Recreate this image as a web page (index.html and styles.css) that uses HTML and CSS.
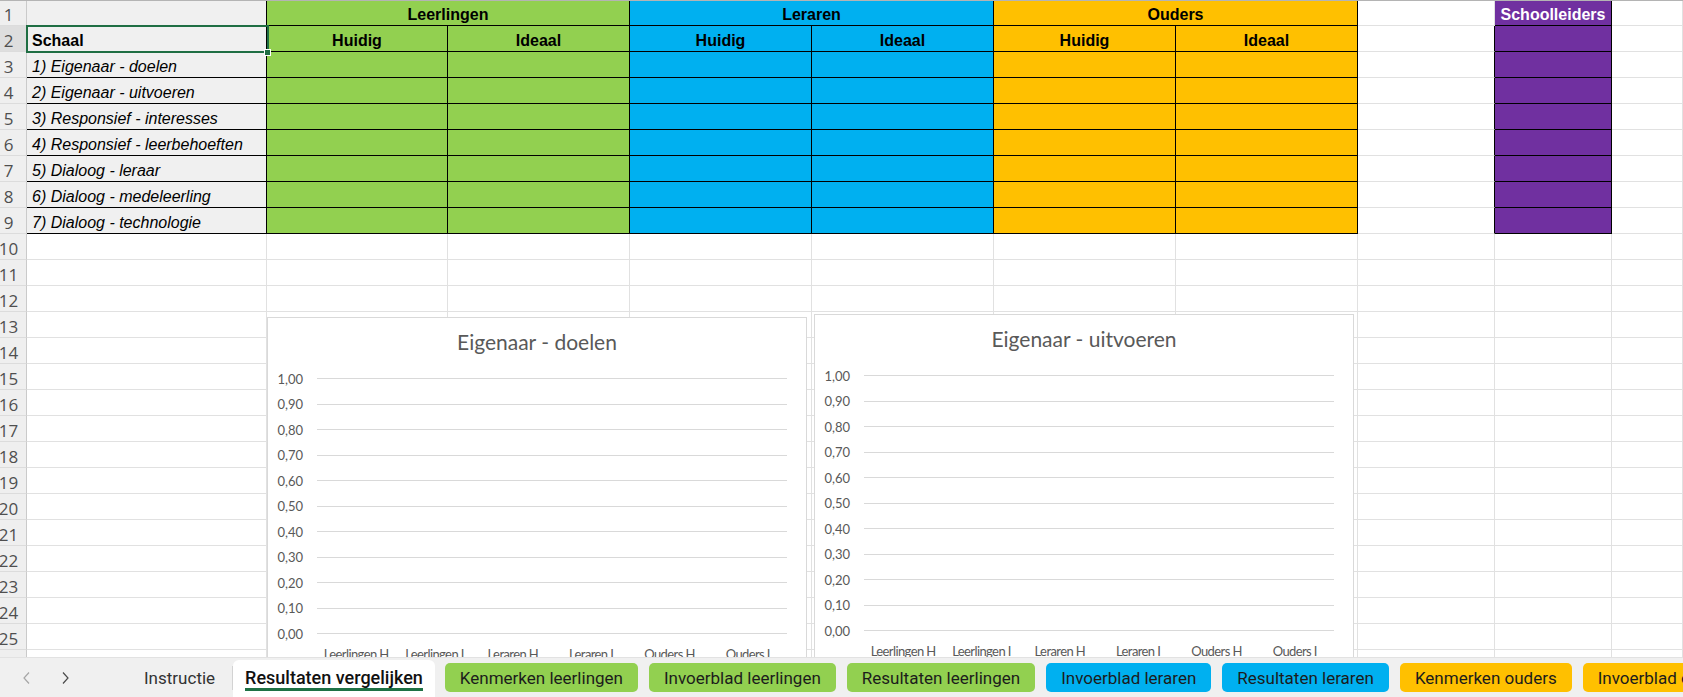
FILE: index.html
```html
<!DOCTYPE html>
<html lang="nl">
<head>
<meta charset="utf-8">
<title>Resultaten vergelijken</title>
<link rel="stylesheet" href="styles.css">
</head>
<body>
<div class="app">
  <div class="sheet">
    <div class="row">
      <div class="c rh">1</div>
      <div class="c a ab1"></div>
      <div class="c g t hd span2">Leerlingen</div>
      <div class="c b t hd span2">Leraren</div>
      <div class="c o t hd span2">Ouders</div>
      <div class="c"></div>
      <div class="c p t hd">Schoolleiders</div>
      <div class="c"></div>
    </div>
    <div class="row">
      <div class="c rh rh-sel">2</div>
      <div class="c a ab schaal">Schaal</div>
      <div class="c g t hd">Huidig</div>
      <div class="c g t hd">Ideaal</div>
      <div class="c b t hd">Huidig</div>
      <div class="c b t hd">Ideaal</div>
      <div class="c o t hd">Huidig</div>
      <div class="c o t hd">Ideaal</div>
      <div class="c hr"></div>
      <div class="c p t"></div>
      <div class="c"></div>
    </div>
    <div class="row">
      <div class="c rh">3</div>
      <div class="c a ab it">1) Eigenaar - doelen</div>
      <div class="c g t"></div><div class="c g t"></div>
      <div class="c b t"></div><div class="c b t"></div>
      <div class="c o t"></div><div class="c o t"></div>
      <div class="c hr"></div><div class="c p t"></div><div class="c"></div>
    </div>
    <div class="row">
      <div class="c rh">4</div>
      <div class="c a ab it">2) Eigenaar - uitvoeren</div>
      <div class="c g t"></div><div class="c g t"></div>
      <div class="c b t"></div><div class="c b t"></div>
      <div class="c o t"></div><div class="c o t"></div>
      <div class="c hr"></div><div class="c p t"></div><div class="c"></div>
    </div>
    <div class="row">
      <div class="c rh">5</div>
      <div class="c a ab it">3) Responsief - interesses</div>
      <div class="c g t"></div><div class="c g t"></div>
      <div class="c b t"></div><div class="c b t"></div>
      <div class="c o t"></div><div class="c o t"></div>
      <div class="c hr"></div><div class="c p t"></div><div class="c"></div>
    </div>
    <div class="row">
      <div class="c rh">6</div>
      <div class="c a ab it">4) Responsief - leerbehoeften</div>
      <div class="c g t"></div><div class="c g t"></div>
      <div class="c b t"></div><div class="c b t"></div>
      <div class="c o t"></div><div class="c o t"></div>
      <div class="c hr"></div><div class="c p t"></div><div class="c"></div>
    </div>
    <div class="row">
      <div class="c rh">7</div>
      <div class="c a ab it">5) Dialoog - leraar</div>
      <div class="c g t"></div><div class="c g t"></div>
      <div class="c b t"></div><div class="c b t"></div>
      <div class="c o t"></div><div class="c o t"></div>
      <div class="c hr"></div><div class="c p t"></div><div class="c"></div>
    </div>
    <div class="row">
      <div class="c rh">8</div>
      <div class="c a ab it">6) Dialoog - medeleerling</div>
      <div class="c g t"></div><div class="c g t"></div>
      <div class="c b t"></div><div class="c b t"></div>
      <div class="c o t"></div><div class="c o t"></div>
      <div class="c hr"></div><div class="c p t"></div><div class="c"></div>
    </div>
    <div class="row">
      <div class="c rh">9</div>
      <div class="c a ab it">7) Dialoog - technologie</div>
      <div class="c g t"></div><div class="c g t"></div>
      <div class="c b t"></div><div class="c b t"></div>
      <div class="c o t"></div><div class="c o t"></div>
      <div class="c hr"></div><div class="c p t"></div><div class="c"></div>
    </div>
    <div class="row"><div class="c rh">10</div><div class="c"></div><div class="c"></div><div class="c"></div><div class="c"></div><div class="c"></div><div class="c"></div><div class="c"></div><div class="c"></div><div class="c"></div><div class="c"></div></div>
    <div class="row"><div class="c rh">11</div><div class="c"></div><div class="c"></div><div class="c"></div><div class="c"></div><div class="c"></div><div class="c"></div><div class="c"></div><div class="c"></div><div class="c"></div><div class="c"></div></div>
    <div class="row"><div class="c rh">12</div><div class="c"></div><div class="c"></div><div class="c"></div><div class="c"></div><div class="c"></div><div class="c"></div><div class="c"></div><div class="c"></div><div class="c"></div><div class="c"></div></div>
    <div class="row"><div class="c rh">13</div><div class="c"></div><div class="c"></div><div class="c"></div><div class="c"></div><div class="c"></div><div class="c"></div><div class="c"></div><div class="c"></div><div class="c"></div><div class="c"></div></div>
    <div class="row"><div class="c rh">14</div><div class="c"></div><div class="c"></div><div class="c"></div><div class="c"></div><div class="c"></div><div class="c"></div><div class="c"></div><div class="c"></div><div class="c"></div><div class="c"></div></div>
    <div class="row"><div class="c rh">15</div><div class="c"></div><div class="c"></div><div class="c"></div><div class="c"></div><div class="c"></div><div class="c"></div><div class="c"></div><div class="c"></div><div class="c"></div><div class="c"></div></div>
    <div class="row"><div class="c rh">16</div><div class="c"></div><div class="c"></div><div class="c"></div><div class="c"></div><div class="c"></div><div class="c"></div><div class="c"></div><div class="c"></div><div class="c"></div><div class="c"></div></div>
    <div class="row"><div class="c rh">17</div><div class="c"></div><div class="c"></div><div class="c"></div><div class="c"></div><div class="c"></div><div class="c"></div><div class="c"></div><div class="c"></div><div class="c"></div><div class="c"></div></div>
    <div class="row"><div class="c rh">18</div><div class="c"></div><div class="c"></div><div class="c"></div><div class="c"></div><div class="c"></div><div class="c"></div><div class="c"></div><div class="c"></div><div class="c"></div><div class="c"></div></div>
    <div class="row"><div class="c rh">19</div><div class="c"></div><div class="c"></div><div class="c"></div><div class="c"></div><div class="c"></div><div class="c"></div><div class="c"></div><div class="c"></div><div class="c"></div><div class="c"></div></div>
    <div class="row"><div class="c rh">20</div><div class="c"></div><div class="c"></div><div class="c"></div><div class="c"></div><div class="c"></div><div class="c"></div><div class="c"></div><div class="c"></div><div class="c"></div><div class="c"></div></div>
    <div class="row"><div class="c rh">21</div><div class="c"></div><div class="c"></div><div class="c"></div><div class="c"></div><div class="c"></div><div class="c"></div><div class="c"></div><div class="c"></div><div class="c"></div><div class="c"></div></div>
    <div class="row"><div class="c rh">22</div><div class="c"></div><div class="c"></div><div class="c"></div><div class="c"></div><div class="c"></div><div class="c"></div><div class="c"></div><div class="c"></div><div class="c"></div><div class="c"></div></div>
    <div class="row"><div class="c rh">23</div><div class="c"></div><div class="c"></div><div class="c"></div><div class="c"></div><div class="c"></div><div class="c"></div><div class="c"></div><div class="c"></div><div class="c"></div><div class="c"></div></div>
    <div class="row"><div class="c rh">24</div><div class="c"></div><div class="c"></div><div class="c"></div><div class="c"></div><div class="c"></div><div class="c"></div><div class="c"></div><div class="c"></div><div class="c"></div><div class="c"></div></div>
    <div class="row"><div class="c rh">25</div><div class="c"></div><div class="c"></div><div class="c"></div><div class="c"></div><div class="c"></div><div class="c"></div><div class="c"></div><div class="c"></div><div class="c"></div><div class="c"></div></div>
    <div class="row"><div class="c rh"></div><div class="c"></div><div class="c"></div><div class="c"></div><div class="c"></div><div class="c"></div><div class="c"></div><div class="c"></div><div class="c"></div><div class="c"></div><div class="c"></div></div>

    <div class="selection"></div>
    <div class="fill-handle"></div>

    <div class="chart chart-1">
      <div class="ctitle">Eigenaar - doelen</div>
      <div class="plot">
        <div class="tick"><span class="yl">1,00</span><span class="gl"></span></div>
        <div class="tick"><span class="yl">0,90</span><span class="gl"></span></div>
        <div class="tick"><span class="yl">0,80</span><span class="gl"></span></div>
        <div class="tick"><span class="yl">0,70</span><span class="gl"></span></div>
        <div class="tick"><span class="yl">0,60</span><span class="gl"></span></div>
        <div class="tick"><span class="yl">0,50</span><span class="gl"></span></div>
        <div class="tick"><span class="yl">0,40</span><span class="gl"></span></div>
        <div class="tick"><span class="yl">0,30</span><span class="gl"></span></div>
        <div class="tick"><span class="yl">0,20</span><span class="gl"></span></div>
        <div class="tick"><span class="yl">0,10</span><span class="gl"></span></div>
        <div class="tick"><span class="yl">0,00</span><span class="gl"></span></div>
      </div>
      <div class="cats">
        <span>Leerlingen H</span><span>Leerlingen I</span><span>Leraren H</span><span>Leraren I</span><span>Ouders H</span><span>Ouders I</span>
      </div>
    </div>

    <div class="chart chart-2">
      <div class="ctitle">Eigenaar - uitvoeren</div>
      <div class="plot">
        <div class="tick"><span class="yl">1,00</span><span class="gl"></span></div>
        <div class="tick"><span class="yl">0,90</span><span class="gl"></span></div>
        <div class="tick"><span class="yl">0,80</span><span class="gl"></span></div>
        <div class="tick"><span class="yl">0,70</span><span class="gl"></span></div>
        <div class="tick"><span class="yl">0,60</span><span class="gl"></span></div>
        <div class="tick"><span class="yl">0,50</span><span class="gl"></span></div>
        <div class="tick"><span class="yl">0,40</span><span class="gl"></span></div>
        <div class="tick"><span class="yl">0,30</span><span class="gl"></span></div>
        <div class="tick"><span class="yl">0,20</span><span class="gl"></span></div>
        <div class="tick"><span class="yl">0,10</span><span class="gl"></span></div>
        <div class="tick"><span class="yl">0,00</span><span class="gl"></span></div>
      </div>
      <div class="cats">
        <span>Leerlingen H</span><span>Leerlingen I</span><span>Leraren H</span><span>Leraren I</span><span>Ouders H</span><span>Ouders I</span>
      </div>
    </div>
  </div>

  <div class="tabs">
    <div class="nav">
      <svg class="arrow" width="10" height="14" viewBox="0 0 10 14"><path d="M8 1.5 L3 7 L8 12.5" fill="none" stroke="#a6a6a6" stroke-width="1.2"/></svg>
      <svg class="arrow" width="10" height="14" viewBox="0 0 10 14"><path d="M2 1.5 L7 7 L2 12.5" fill="none" stroke="#4a4a4a" stroke-width="1.2"/></svg>
    </div>
    <div class="tab plain">Instructie</div>
    <div class="sep"></div>
    <div class="tab active"><span>Resultaten vergelijken</span></div>
    <div class="tab col tg first">Kenmerken leerlingen</div>
    <div class="tab col tg">Invoerblad leerlingen</div>
    <div class="tab col tg">Resultaten leerlingen</div>
    <div class="tab col tb">Invoerblad leraren</div>
    <div class="tab col tb">Resultaten leraren</div>
    <div class="tab col to">Kenmerken ouders</div>
    <div class="tab col to">Invoerblad ouders</div>
  </div>
</div>
</body>
</html>
```

FILE: styles.css
```css
* { box-sizing: border-box; margin: 0; padding: 0; }
html, body { width: 1683px; height: 697px; overflow: hidden; background: #fff; }
body { font-family: "Liberation Sans", Arial, sans-serif; color: #000; }

.app { display: flex; flex-direction: column; width: 1683px; height: 697px; }

.sheet { position: relative; height: 657px; flex: none; overflow: hidden; }
.sheet::before { content: ""; position: absolute; left: 0; top: 0; right: 0; height: 1px; background: #b4b4b4; z-index: 5; }

.row {
  display: grid;
  grid-template-columns: 27px 240px 181px 182px 182px 182px 182px 182px 137px 117px 71px;
  height: 26px;
}

.c {
  border-right: 1px solid #e1e1e1;
  border-bottom: 1px solid #e1e1e1;
  display: flex;
  align-items: flex-end;
  font-size: 16px;
  line-height: 18px;
  padding: 0 0 1px 5px;
  white-space: nowrap;
  overflow: hidden;
}
.span2 { grid-column: span 2; }

.rh {
  background: #efefef;
  border-right-color: #cacaca;
  border-bottom-color: #dcdcdc;
  font-family: "Open Sans", sans-serif;
  font-size: 17px;
  color: #4f4f4f;
  justify-content: center;
  padding: 0 9px 1px 0;
}
.rh-sel { background: #dedede; }

.a { background: #f0f0f0; border-right-color: #000; }
.ab { border-bottom-color: #000; }
.ab1 { border-bottom-color: #d6d6d6; }
.schaal { font-weight: bold; }
.it { font-style: italic; }

.g { background: #92d050; }
.b { background: #00b0f0; }
.o { background: #ffc000; }
.p { background: #7030a0; color: #fff; }
.t { border-right-color: #000; border-bottom-color: #000; }
.hr { border-right-color: #000; }
.hd { font-weight: bold; justify-content: center; padding-left: 0; }

.selection {
  position: absolute;
  left: 26px; top: 25px;
  width: 243px; height: 28px;
  border: 2px solid #1f6e43;
  z-index: 4;
}
.fill-handle {
  position: absolute;
  left: 264px; top: 49px;
  width: 7px; height: 7px;
  background: #1f6e43;
  border: 1px solid #fff;
  z-index: 4;
}

/* charts */
.chart {
  position: absolute;
  width: 540px; height: 400px;
  background: #fff;
  border: 1px solid #d9d9d9;
  z-index: 2;
  font-family: Lato, "Open Sans", sans-serif;
  color: #595959;
}
.chart-1 { left: 267px; top: 317px; }
.chart-2 { left: 814px; top: 314px; }

.ctitle {
  height: 48px;
  padding-top: 0;
  padding-bottom: 2px;
  display: flex;
  align-items: center;
  justify-content: center;
  font-size: 21px;
  color: #595959;
}
.plot { display: flex; flex-direction: column; }
.tick { display: flex; align-items: center; height: 25.5px; }
.yl { width: 35px; text-align: right; font-size: 13px; line-height: 14px; }
.gl { height: 1px; width: 470px; margin-left: 14px; background: #d9d9d9; }
.cats { display: flex; margin-left: 49px; width: 470px; padding-top: 0; }
.cats span { flex: 1; text-align: center; font-size: 13px; line-height: 15px; letter-spacing: -0.6px; white-space: nowrap; }

/* sheet tabs */
.tabs {
  height: 40px;
  flex: none;
  background: #f0f0f0;
  border-top: 1px solid #e2e2e2;
  display: flex;
  align-items: flex-start;
  font-family: Roboto, "Open Sans", sans-serif;
  font-size: 17px;
  white-space: nowrap;
  overflow: hidden;
}
.nav {
  width: 127px;
  height: 39px;
  flex: none;
  display: flex;
  align-items: center;
  gap: 30px;
  padding-left: 21px;
}
.tab { flex: none; display: flex; align-items: center; }
.plain { height: 30px; margin-top: 5px; padding: 0 17px; color: #333; }
.sep { width: 1px; height: 24px; margin-top: 8px; background: #d3d3d3; flex: none; }
.active {
  margin-top: 2px;
  height: 37px;
  padding: 8px 12px 0;
  align-items: flex-start;
  background: #fff;
  border-radius: 6px 6px 0 0;
  color: #111;
  font-weight: 500;
  font-size: 18px;
}
.active span { line-height: 20px; border-bottom: 3px solid #1e7145; }
.col {
  height: 29px;
  margin-top: 5px;
  margin-left: 11px;
  padding: 0 15px;
  border-radius: 5px;
  color: #1c1c1c;
}
.col.first { margin-left: 10px; }
.tg { background: #92d050; }
.tb { background: #00b0f0; }
.to { background: #ffc000; }
```
